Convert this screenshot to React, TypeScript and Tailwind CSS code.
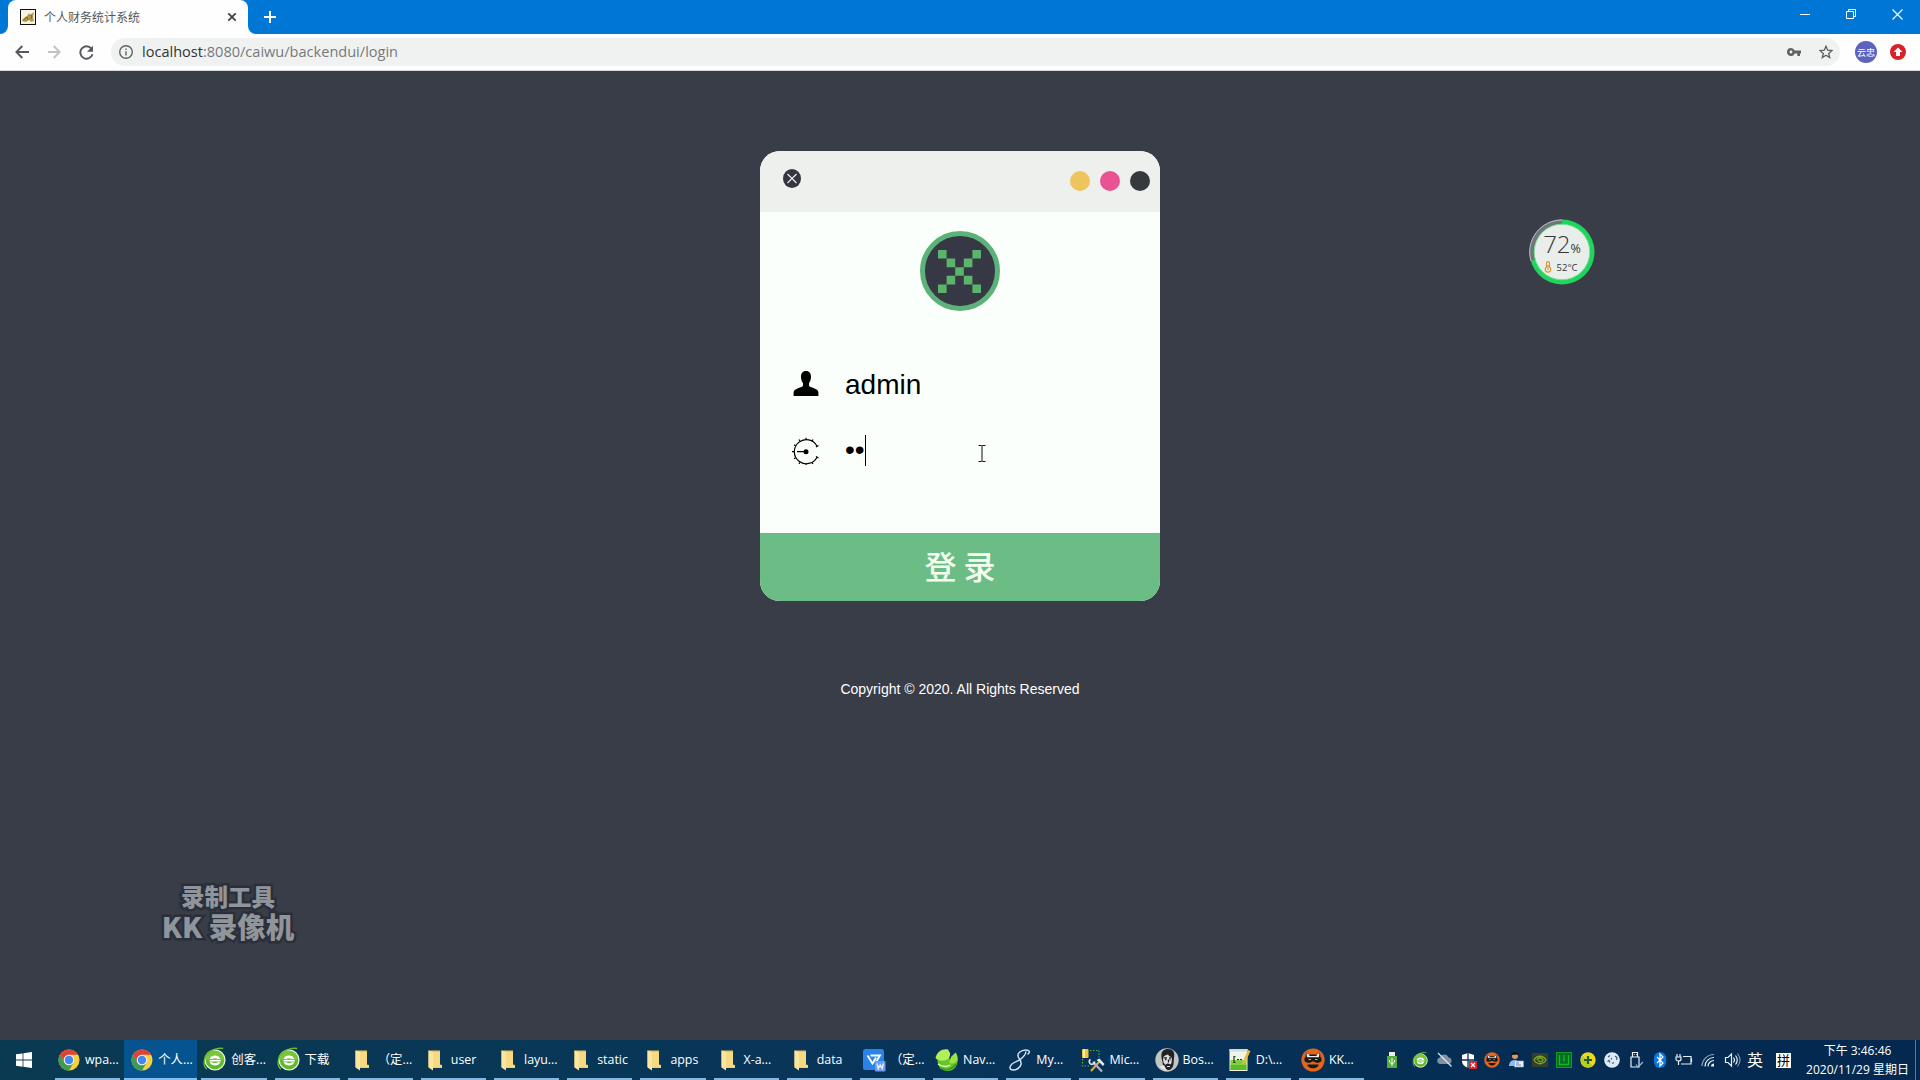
import React from "react";

const ui = "font-['Open_Sans','Noto_Sans_CJK_SC',sans-serif]";

function ChromeIcon() {
  return (
    <svg width="22" height="22" viewBox="0 0 24 24">
      <circle cx="12" cy="12" r="11.5" fill="#f8cf3d" />
      <path d="M12 12 2.04 6.25A11.5 11.5 0 0 1 21.96 6.25L12 6.25Z" fill="#d9453a" />
      <path d="M2.04 6.25A11.5 11.5 0 0 0 12 23.5L17 14.9 7 14.9Z" fill="#3f9b52" />
      <path d="M2.04 6.25 7 14.9 12 12 12 6.25 6 6Z" fill="#d9453a" />
      <path d="M2.04 6.25 7.1 15 12 17.5 10 19 2 12Z" fill="#3f9b52" />
      <circle cx="12" cy="12" r="5.8" fill="#f4f4f4" />
      <circle cx="12" cy="12" r="4.6" fill="#4487ee" />
    </svg>
  );
}

function GreenE({ size = 22 }: { size?: number }) {
  return (
    <svg width={size} height={size} viewBox="0 0 24 24" overflow="visible">
      <circle cx="12" cy="12" r="10.8" fill="#62b82c" stroke="#e4f5d8" strokeWidth="1.500" />
      <path d="M2 12a10 10 0 0 1 20 0Z" fill="#79c63a" />
      <path d="M6.200 11C7 8 9.500 7 12 7s5 1 5.800 4h-3.300c-.5-1.300-4.500-1.300-5 0ZM6 12h12.300v1.500H6ZM6.200 14.500h3.300c.5 1.300 4.500 1.300 5 0h3.300c-.8 2.500-3.300 3.500-5.800 3.500s-5-1-5.800-3.500Z" fill="#fff" />
      <path d="M1 9C5 2 14-2 21-.500M3 22C-1 18 0 12 2 8" fill="none" stroke="#69ba35" strokeWidth="1.500" />
    </svg>
  );
}

function FolderIcon() {
  return (
    <svg width="22" height="22" viewBox="0 0 22 22">
      <path d="M4.500 1.500h11.500v14l2 .5v3H8l-3.500-1Z" fill="#e9c460" />
      <path d="M4.500 1.500 9 3v18.500l-4.500-3Z" fill="#fbe6a0" />
      <path d="M9 3h7v13l2 .5v2H9Z" fill="#f6d981" />
    </svg>
  );
}

function VpnDocIcon() {
  return (
    <svg width="24" height="24" viewBox="0 0 24 24" className="shrink-0">
      <rect x="1" y="1" width="21" height="21" rx="2.500" fill="#2b83ea" />
      <path d="M5.500 7.500 10.500 15.500 14 9.500M8.500 7.500H18L13.500 15" fill="none" stroke="#fff" strokeWidth="1.800" />
      <rect x="13" y="13" width="10.500" height="10.500" rx="1" fill="#6f9ced" />
      <path d="m15 15.500 1.300 5 1.900-3.500 1.900 3.500 1.300-5" fill="none" stroke="#e6efff" strokeWidth="1.400" />
    </svg>
  );
}

function NavicatIcon() {
  return (
    <svg width="24" height="24" viewBox="0 0 24 24" className="shrink-0">
      <path d="M12 3C5 3 2 8 2.500 13.500 3 19 7 23 12.500 23 19 23 23 18 22.500 12L21 6l-6 6Z" fill="#63c626" />
      <path d="M.5 10C2 4 7 .5 13 1.500L15 5c.5 3-1 6-4 7-4 1.500-8 .5-10.500-2Z" fill="#b3ee5c" />
      <path d="M16 9 20.500 4.500c2 2 2.500 5 2 8-2 3-6 4-8.500 2Z" fill="#9be344" />
      <path d="M3 16c4 3 9 3 12 1" fill="none" stroke="#e5fbc8" strokeWidth="1.500" />
      <path d="M5 20c5 3 12 2 16-4" fill="none" stroke="#2f9a1d" strokeWidth="1.500" />
    </svg>
  );
}

function EightIcon() {
  return (
    <svg width="22" height="22" viewBox="0 0 22 22" fill="none" stroke="#cfe0f5" strokeWidth="1.500">
      <path d="M18.500 5.500C22 3 20 .8 16.500 1 12 1.300 8.500 4 9 7c.5 3 4 5 3 8.500C11 19 7 21.500 3.500 21 0 20.500.5 17 3 15c3-2.500 7-3 9.500-5.500C14.500 7.500 17.500 4 16.500 2.500" />
    </svg>
  );
}

function ToolsIcon() {
  return (
    <svg width="24" height="24" viewBox="0 0 24 24" className="shrink-0">
      <path d="M9 2.500h9v7M1.500 11v7H8" fill="none" stroke="#4fae3b" strokeWidth="1.200" strokeDasharray="1.500 1.500" />
      <rect x="1" y="1" width="6.500" height="9" rx="1" fill="#f4c343" />
      <rect x="2" y="1" width="2" height="9" fill="#fdeaa0" />
      <path d="m10 23 8-9" stroke="#d9aa4a" strokeWidth="2.200" />
      <path d="m12 14 9 9.500" stroke="#aeb6c2" strokeWidth="2.200" />
      <path d="m15.500 12 3-1.500 5 5.500-1.500 2-3-3Z" fill="#e4e9ef" />
      <path d="M9.500 11.500a2.600 2.600 0 1 0 4 2" fill="none" stroke="#dfe4ea" strokeWidth="1.700" />
    </svg>
  );
}

function FaceIcon() {
  return (
    <svg width="24" height="24" viewBox="0 0 24 24" className="shrink-0">
      <circle cx="12" cy="12" r="11.700" fill="#c3c5c3" />
      <path d="M6.500 10C5.500 3 9 1 13 1c5 0 7 3 6 9l-.5 6c-.5 4-3 6-5 6-3.500 0-6-4-6-8Z" fill="#1f2122" />
      <path d="M8 10c.5-2 2.500-3 5-3.500 1 2 3 2 4 3.500l-.5 5-1 1.500c-2-1.500-4-1.500-5 .5L8.500 14.500Z" fill="#dededc" />
      <path d="M8.500 9.800H12M14 9.800h2.500M10 11.500h1.500M14.500 11.500h1M13.500 11.500v3" stroke="#222" strokeWidth="1.300" />
      <path d="M12 18.500h3" stroke="#dededc" />
      <path d="m4 19 5-2 3 6Z" fill="#e9e9e7" />
    </svg>
  );
}

function NotepadIcon() {
  return (
    <svg width="24" height="24" viewBox="0 0 24 24" className="shrink-0">
      <rect x="1.500" y="1" width="18" height="22" fill="#eef4ea" />
      <path d="M2.500 12h16v10H2.500Z" fill="#7fd042" />
      <path d="M2.500 17h16v5H2.500Z" fill="#5fba28" />
      <path d="M1.500 1h18v2.500h-18Z" fill="#d5dbd2" />
      <path d="M6 8v7M6 8.500h1.500M6 14.500h1.500M9 11.500h2M12 11.500h2" stroke="#1d3a18" strokeWidth="1.200" />
      <path d="m14.500 14 5.500-12 2.500 1-5.500 12-2.500 1.500Z" fill="#e8b93c" />
    </svg>
  );
}

function NinjaIcon({ size = 24 }: { size?: number }) {
  return (
    <svg width={size} height={size} viewBox="0 0 24 24" className="shrink-0">
      <circle cx="12" cy="12" r="11.600" fill="#e2661c" />
      <path d="M5 4.500 9 6.500h6l4-2 .5 6h-15Z" fill="#17181a" />
      <path d="M5.500 5 9 7 6 9ZM18.500 5 15 7l3 2Z" fill="#eee" />
      <path d="M6 8h12v1.500H6Z" fill="#eee" />
      <path d="M3.500 9.500h17v3.500c-2 2.500-6 2-7.500.5h-2c-1.500 1.500-5.500 2-7.500-.5Z" fill="#17181a" />
      <path d="M7.500 11.500h2.500M14 11.500h2.500" stroke="#e7e4e0" strokeWidth=".8" />
      <path d="M6.500 16.500h11c0 5-11 5-11 0Z" fill="#17181a" />
    </svg>
  );
}

const tasks: { label: string; icon: React.ReactNode; active?: boolean }[] = [
  { label: "wpa...", icon: <ChromeIcon /> },
  { label: "个人...", icon: <ChromeIcon />, active: true },
  { label: "创客...", icon: <GreenE /> },
  { label: "下载", icon: <GreenE /> },
  { label: "（定...", icon: <FolderIcon /> },
  { label: "user", icon: <FolderIcon /> },
  { label: "layu...", icon: <FolderIcon /> },
  { label: "static", icon: <FolderIcon /> },
  { label: "apps", icon: <FolderIcon /> },
  { label: "X-a...", icon: <FolderIcon /> },
  { label: "data", icon: <FolderIcon /> },
  { label: "（定...", icon: <VpnDocIcon /> },
  { label: "Nav...", icon: <NavicatIcon /> },
  { label: "My...", icon: <EightIcon /> },
  { label: "Mic...", icon: <ToolsIcon /> },
  { label: "Bos...", icon: <FaceIcon /> },
  { label: "D:\\...", icon: <NotepadIcon /> },
  { label: "KK...", icon: <NinjaIcon /> },
];

const trayIcons: React.ReactNode[] = [
  <GreenE size={15} />,
  <svg width="17" height="16" viewBox="0 0 17 16">
    <path d="M4 12a3.300 3.300 0 0 1 0-6.500 4.500 4.500 0 0 1 8.500 0A3.300 3.300 0 0 1 13 12Z" fill="#8192a3" />
    <path d="m2 1 13.500 13.500" stroke="#dfe6ee" strokeWidth="1.200" />
  </svg>,
  <svg width="17" height="17" viewBox="0 0 17 17">
    <path d="M8 1 14 3v6c0 4-4 6-6 7-2-1-6-3-6-7V3Z" fill="#fff" />
    <path d="M8 1v15M2 8h12" stroke="#0a2e52" strokeWidth="1.300" />
    <rect x="9" y="9" width="8" height="8" fill="#d9232e" />
    <path d="m11 11 4 4m0-4-4 4" stroke="#fff" strokeWidth="1.200" />
  </svg>,
  <NinjaIcon size={16} />,
  <svg width="16" height="16" viewBox="0 0 16 16">
    <circle cx="7" cy="4" r="3" fill="#d99a63" />
    <path d="M3 4a4 4 0 0 1 8 0L9 2.500 4 3Z" fill="#111" />
    <path d="M1 14c0-8 11-8 11 0Z" fill="#8dbbe8" />
    <rect x="6.500" y="9" width="9" height="6" fill="#e9f2fb" stroke="#7fa8d4" strokeWidth=".6" />
    <path d="M8 11h3M8 13h5" stroke="#5b83b5" />
  </svg>,
  <svg width="16" height="14" viewBox="0 0 16 14">
    <rect width="16" height="14" fill="#35402c" />
    <path d="M2 7c3-5 9-5 12 0-3 5-9 5-12 0Zm3 0c1-3 5-3 6 0-1 3-5 2-4 0" fill="none" stroke="#78a81f" strokeWidth="1.300" />
  </svg>,
  <svg width="16" height="16" viewBox="0 0 16 16">
    <rect x=".5" y=".5" width="15" height="15" fill="#0a6d1b" stroke="#0d9a2b" />
    <path d="M3.500 3v9.500h9V3M8 3v6.500" fill="none" stroke="#12b534" strokeWidth="1.300" />
  </svg>,
  <svg width="16" height="16" viewBox="0 0 16 16">
    <circle cx="8" cy="8" r="7.700" fill="#f1d81c" />
    <path d="M2 13C0 9 1 6 3 4l10 10C9 16 5 16 2 13Z" fill="#b7cf1d" />
    <path d="M8 4v8M4 8h8" stroke="#17612a" strokeWidth="2.200" />
  </svg>,
  <svg width="16" height="16" viewBox="0 0 16 16">
    <circle cx="8" cy="8" r="7.800" fill="#dcebf7" />
    <path d="m4 5 2-1.500M3.500 9.500l1.500-1 1 2M11 4l2 1.500-.5 2.500M8 11.500l2-1M7 6l1 1.500" fill="none" stroke="#3e5a75" strokeWidth="1.200" />
  </svg>,
  <svg width="16" height="18" viewBox="0 0 16 18" fill="none" stroke="#e8eef5" strokeWidth="1.200">
    <path d="M4.500 6V1.500h5V6M3 6h8v10H3ZM6 3.500h.700M8 3.500h.700" />
    <path d="m8 13.500 2 2.500 5-5" stroke="#9cb8d4" />
  </svg>,
  <svg width="14" height="18" viewBox="0 0 14 18">
    <rect x="1" y="1" width="12" height="16" rx="6" fill="#0a78e0" />
    <path d="m4 6 6 6-3 3V3l3 3-6 6" fill="none" stroke="#fff" strokeWidth="1.200" />
  </svg>,
  <svg width="18" height="14" viewBox="0 0 18 14" fill="none" stroke="#e8eef5" strokeWidth="1.200">
    <path d="M8 3.500h8v7.500H6M16.500 5.500v3.500M2 1v3M5 1v3M1 4h5v2c0 1-1 2-2.500 2S1 7 1 6ZM3.500 8v4" />
  </svg>,
  <svg width="16" height="16" viewBox="0 0 16 16" fill="none" strokeWidth="1.200">
    <path d="M2 14A12 12 0 0 1 14 2.500" stroke="#8fa5bb" />
    <path d="M5 14.500A9 9 0 0 1 14 5.500M8 14.500A6 6 0 0 1 14 8.500" stroke="#e8eef5" />
    <path d="M11 14.500A3 3 0 0 1 14 11.500V14.500Z" fill="#e8eef5" />
  </svg>,
  <svg width="17" height="16" viewBox="0 0 17 16" fill="none" stroke="#e8eef5" strokeWidth="1.200">
    <path d="M1.500 5.500H4L7.500 2v12L4 10.500H1.500ZM9.500 5.500q2 2.500 0 5M11.500 3.500q3.500 4.500 0 9" />
    <path d="M13.500 1.500q5 6.500 0 13" stroke="#7d95ad" />
  </svg>,
];

function TitleBar() {
  return (
    <div className="flex h-[34px] items-end bg-[#0076d5] text-white">
      <div className="w-2 self-stretch bg-[#fdfefd]">
        <div className="h-full rounded-br-lg bg-[#0076d5]" />
      </div>
      <div className="h-[34px] w-[240px] bg-[#0076d5]">
        <div className="flex h-full items-center rounded-t-lg bg-[#fdfefd] pr-[11px] pl-3">
          <svg width="16" height="16" viewBox="0 0 16 16">
            <rect x=".5" y=".5" width="15" height="15" fill="#f5f4e4" stroke="#111" />
            <path d="M2 12c1-3 3-4 5-5l2-3 1 2 4-3-1 5 1 4-3 1-2-2-3 2Z" fill="#b69a4a" />
            <path d="m3 12 4-4 1 3m2-5 2 1-1 3" fill="none" stroke="#6b6a45" />
          </svg>
          <span className={`${ui} ml-2 pt-[2px] text-[12px] text-[#55585c]`}>个人财务统计系统</span>
          <svg className="ml-auto" width="10" height="10" viewBox="0 0 10 10">
            <path d="m1.300 1.300 7.400 7.400m0-7.400L1.300 8.700" stroke="#3f4246" strokeWidth="1.800" />
          </svg>
        </div>
      </div>
      <div className="h-[34px] grow bg-[#fdfefd]">
        <div className="flex h-full items-center rounded-bl-lg bg-[#0076d5] pl-[16px]">
          <svg width="12" height="12" viewBox="0 0 12 12">
            <path d="M6 0v12M0 6h12" stroke="#fff" strokeWidth="2" />
          </svg>
        </div>
      </div>
      <div className="h-[34px] w-[138px] bg-[#0076d5]">
        <div className="flex h-[28px] items-center">
          <span className="flex w-[46px] justify-center"><svg width="10" height="10"><path d="M0 5.500h10" stroke="#fff" /></svg></span>
          <span className="flex w-[46px] justify-center">
            <svg width="10" height="10" fill="none" stroke="#fff"><path d="M.5 2.500h7v7h-7ZM2.500 2V.5h7v7H8" /></svg>
          </span>
          <span className="flex w-[46px] justify-center"><svg width="11" height="11"><path d="m.5.5 10 10m0-10-10 10" stroke="#fff" strokeWidth="1.100" /></svg></span>
        </div>
      </div>
    </div>
  );
}

function Toolbar() {
  return (
    <div className="flex h-[37px] items-center border-b border-[#d5d7d9] bg-[#fdfefd] pl-[15px]">
      <svg width="14" height="14" viewBox="0 0 14 14" fill="none" stroke="#54585c" strokeWidth="1.900"><path d="M14 7H1.500M7.300 1 1.400 7l5.900 6" /></svg>
      <svg className="ml-[19px]" width="13" height="14" viewBox="0 0 13 14" fill="none" stroke="#bfc2c4" strokeWidth="1.900"><path d="M0 7h11.500M5.700 1l5.900 6-5.900 6" /></svg>
      <svg className="ml-[18px]" width="15" height="15" viewBox="0 0 15 15">
        <path d="M12.300 3.500A6.200 6.200 0 1 0 13.500 9.200" fill="none" stroke="#54585c" strokeWidth="1.900" />
        <path d="M14 .8v6H8Z" fill="#54585c" />
      </svg>
      <div className="ml-[17px] flex h-7 w-[1729px] items-center rounded-full bg-[#f0f2f1] pr-[7px] pl-2">
        <svg width="14" height="14" viewBox="0 0 14 14" fill="none" stroke="#5f6367" strokeWidth="1.400">
          <circle cx="7" cy="7" r="6.300" /><path d="M7 6.200v4.300M7 3.400v1.500" />
        </svg>
        <span className="ml-[9px] font-['Open_Sans',sans-serif] text-[14.550px] text-[#75797c]">
          <span className="text-[#303336]">localhost</span>:8080/caiwu/backendui/login
        </span>
        <svg className="ml-auto" width="14" height="8" viewBox="0 0 14 8">
          <path fillRule="evenodd" d="M4 0a4 4 0 0 1 3.700 2.600H14v2.800h-1V8h-2.700V5.400H7.700A4 4 0 1 1 4 0Zm0 2.600a1.400 1.400 0 1 0 0 2.800 1.400 1.400 0 0 0 0-2.800Z" fill="#5f6367" />
        </svg>
        <svg className="ml-[18px]" width="14" height="14" viewBox="0 0 14 14"><path d="m7 1.200 1.700 4 4.300.4-3.300 2.800 1 4.200L7 10.300l-3.700 2.300 1-4.200L1 5.600l4.300-.4Z" fill="none" stroke="#5a5e62" strokeWidth="1.300" /></svg>
      </div>
      <div className={`${ui} ml-[15px] flex size-[22px] items-center justify-center rounded-full bg-[#5c62bd] text-[9px] leading-none text-white`}>云忠</div>
      <svg className="ml-[13px]" width="16" height="16" viewBox="0 0 16 16">
        <circle cx="8" cy="8" r="8" fill="#d8222a" />
        <path d="m8 3.500 4.500 4.500H10v4H6V8H3.500Z" fill="#fff" />
      </svg>
    </div>
  );
}

function LoginCard() {
  return (
    <div className="flex h-[450px] w-[400px] flex-col overflow-hidden rounded-[20px] bg-[#fbfffb]">
      <div className="flex h-[61px] items-start justify-between bg-[#eef0ee] pt-[18px] pr-[10px] pl-[23px]">
        <svg width="18" height="19" viewBox="0 0 18 19">
          <ellipse cx="9" cy="9.500" rx="9" ry="9.500" fill="#343742" />
          <path d="m4.500 5 9 9m0-9-9 9" stroke="#e9ebea" strokeWidth="1.200" />
        </svg>
        <div className="flex gap-[10px] pt-[2px]">
          <span className="size-5 rounded-full bg-[#edc55c]" />
          <span className="size-5 rounded-full bg-[#ea5293]" />
          <span className="size-5 rounded-full bg-[#36393e]" />
        </div>
      </div>
      <div className="flex grow flex-col pt-[19px]">
        <div className="flex size-20 items-center justify-center self-center rounded-full border-5 border-[#5bb37a] bg-[#363945] pr-[2px]">
          <svg width="43" height="43" viewBox="0 0 5 5" fill="#5cb46a">
            <path d="M0 0h1v1H0ZM4 0h1v1H4ZM1 1h1v1H1ZM3 1h1v1H3ZM2 2h1v1H2ZM1 3h1v1H1ZM3 3h1v1H3ZM0 4h1v1H0ZM4 4h1v1H4Z" />
          </svg>
        </div>
        <div className="mt-[49px] flex h-12 items-center pl-[32px]">
          <svg width="28" height="28" viewBox="0 0 28 28">
            <path d="M14 1c3.500 0 5 2.500 5 5.500 0 3-.7 5-2 6.700v2.300c0 1.200 2.500 1.700 5 2.700 3 1.200 4.400 2.200 4.400 4.300v3.500H1.600V22.500c0-2.100 1.400-3.100 4.400-4.300 2.500-1 5-1.500 5-2.700v-2.300C9.700 11.500 9 9.500 9 6.500c0-3 1.500-5.500 5-5.500Z" />
          </svg>
          <span className="ml-[25px] pt-[2px] font-['Liberation_Sans',sans-serif] text-[28px] leading-none text-black">admin</span>
        </div>
        <div className="mt-[19px] flex h-12 items-center pl-[32px]">
          <svg width="28" height="28" viewBox="0 0 28 28" fill="none" stroke="#000" strokeWidth="1.200">
            <g transform="translate(0 .7)">
              <path d="M25 8.500A12 12 0 1 0 25 19.500" />
              <path d="M14 2V0M8 3.500 7 1.800M20 3.500l1-1.700M3.600 8 2 7M2 14H0M3.600 20 2 21M8 24.500 7 26.200M14 26v2M20 24.500l1 1.700M24 9.200l2.500-1.500M24 18.800l2.500 1.500M5 14h8" />
              <circle cx="14" cy="14" r="2.500" fill="#000" stroke="none" />
            </g>
          </svg>
          <span className="ml-[25px] pb-[2px] font-['Liberation_Sans',sans-serif] text-[28px] leading-none text-black">••</span>
          <span className="mb-px h-[31px] w-px bg-black" />
        </div>
      </div>
      <div className="flex h-[68px] items-center justify-center bg-[#6cbd85] pb-[4px] font-['Noto_Sans_CJK_SC',sans-serif] text-[32px] leading-none font-medium text-[#f5fff0]">登 录</div>
    </div>
  );
}

function Taskbar() {
  return (
    <div className={`${ui} flex h-10 bg-linear-to-r from-[#0a3a52] via-[#08345a] to-[#04284f] text-white`}>
      <div className="flex w-[51px] items-center pl-4">
        <svg width="16" height="16" viewBox="0 0 16 16" fill="#fff"><path d="M0 2.300 6.600 1.400v6.200H0ZM7.400 1.300 16 0v7.600H7.400ZM0 8.400h6.600v6.300L0 13.700ZM7.400 8.400H16V16L7.400 14.700Z" /></svg>
      </div>
      {tasks.map((t, i) => (
        <div key={i} className={`flex h-10 w-[73.180px] shrink-0 flex-col ${t.active ? "bg-[#05548f]" : ""}`}>
          <div className="flex h-[38px] items-center pt-[2px] pl-[7px]">
            <span className="flex w-[22px] justify-center">{t.icon}</span>
            <span className="ml-[5px] text-[12.400px] leading-none whitespace-nowrap">{t.label}</span>
          </div>
          <div className={t.active ? "h-[2px] bg-[#7fbdf2]" : "mx-1 h-[2px] bg-[#86b8e0]"} />
        </div>
      ))}
      <div className="ml-auto flex items-center">
        <div className="mr-[8px] flex w-[16px] justify-center">
          <svg width="10" height="16" viewBox="0 0 10 16">
            <path d="M2 0h6v4H2Z" fill="#e9eeea" /><path d="M0 4h10v12H0Z" fill="#55ad3c" />
            <path d="M5 6v8M2.500 8v2L5 12l2.500-2V8" fill="none" stroke="#fff" />
          </svg>
        </div>
        {trayIcons.map((icon, i) => (
          <span key={i} className="flex w-6 justify-center">{icon}</span>
        ))}
        <span className="-ml-px flex w-6 justify-center pb-px text-[16px] leading-none">英</span>
        <span className="ml-[9px] flex size-[15px] items-center justify-center bg-white text-[13px] leading-none text-black">拼</span>
      </div>
      <div className="ml-[14px] flex w-[105px] flex-col items-center justify-center gap-[7px] text-[12px] leading-[12px] whitespace-nowrap">
        <span>下午 3:46:46</span>
        <span>2020/11/29 星期日</span>
      </div>
      <div className="ml-[5px] w-[5px] border-l border-[#5c7590]" />
    </div>
  );
}

function Gauge() {
  return (
    <div className="absolute top-[148px] left-[1529px] flex size-[66px] items-center justify-center">
      <svg className="absolute inset-0" width="66" height="66" viewBox="0 0 66 66">
        <circle cx="33" cy="33" r="32.500" fill="#20d45c" />
        <path d="M33 33V.5A32.500 32.500 0 0 0 2 42Z" fill="#70757b" />
        <path d="M33 1A32 32 0 0 0 2 42" fill="none" stroke="#b8bcc0" />
        <circle cx="33" cy="33" r="27.800" fill="#e9eeea" stroke="#75df93" />
      </svg>
      <div className={`${ui} relative flex flex-col items-center pt-px text-[#343836]`}>
        <div className="flex items-baseline pt-[2px] leading-[20px]"><span className="text-[24px] font-light">72</span><span className="text-[12.500px]">%</span></div>
        <div className="mt-[2px] mr-[3px] flex items-center gap-[5px] text-[9.500px] leading-[11px]">
          <svg width="8" height="12" viewBox="0 0 8 12" fill="none" stroke="#dc952c" strokeWidth="1.200"><path d="M2.500 6V2.200a1.500 1.500 0 0 1 3 0V6a2.800 2.800 0 1 1-3 0ZM4 4v5" /></svg>
          <span>52°C</span>
        </div>
      </div>
    </div>
  );
}

const outline = "[-webkit-text-stroke:5px_#2b2f39] [paint-order:stroke_fill]";

export default function App() {
  return (
    <div className="flex h-[1080px] w-[1920px] flex-col overflow-hidden bg-[#393d47]">
      <TitleBar />
      <Toolbar />
      <main className="relative flex grow flex-col items-center pt-[80px]">
        <LoginCard />
        <p className="mt-[80px] font-['Liberation_Sans',sans-serif] text-[14px] leading-4 text-white">Copyright © 2020. All Rights Reserved</p>
        <Gauge />
        <svg className="absolute top-[374px] left-[977px]" width="10" height="17" viewBox="0 0 10 17" fill="none" stroke="#111"><path d="M1.500.500h3l.500.500.500-.500h3M5 1v15M1.500 16.500h3L5 16l.500.500h3" /></svg>
        <div className={`absolute top-[813px] left-[161px] flex w-[134px] flex-col items-center gap-[4px] font-['Noto_Sans_CJK_SC',sans-serif] font-black whitespace-nowrap text-[#90949b] ${outline}`}>
          <span className="text-[23.500px] leading-[24px]">录制工具</span>
          <span className="text-[28.500px] leading-[28px]">KK 录像机</span>
        </div>
      </main>
      <Taskbar />
    </div>
  );
}
